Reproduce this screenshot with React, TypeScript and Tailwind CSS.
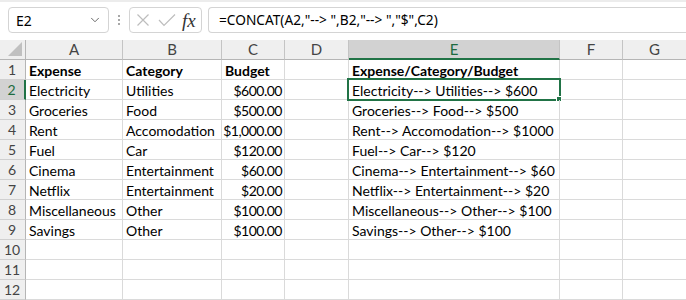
import { ChevronDown } from 'lucide-react';

type Row = { a: string; b: string; c: string; e: string };

const rows: Row[] = [
  { a: 'Electricity', b: 'Utilities', c: '$600.00', e: 'Electricity--> Utilities--> $600' },
  { a: 'Groceries', b: 'Food', c: '$500.00', e: 'Groceries--> Food--> $500' },
  { a: 'Rent', b: 'Accomodation', c: '$1,000.00', e: 'Rent--> Accomodation--> $1000' },
  { a: 'Fuel', b: 'Car', c: '$120.00', e: 'Fuel--> Car--> $120' },
  { a: 'Cinema', b: 'Entertainment', c: '$60.00', e: 'Cinema--> Entertainment--> $60' },
  { a: 'Netflix', b: 'Entertainment', c: '$20.00', e: 'Netflix--> Entertainment--> $20' },
  { a: 'Miscellaneous', b: 'Other', c: '$100.00', e: 'Miscellaneous--> Other--> $100' },
  { a: 'Savings', b: 'Other', c: '$100.00', e: 'Savings--> Other--> $100' },
];

const cell = 'h-[20px] shrink-0 border-r border-b border-[#dadada] px-[3px] pt-[1px] leading-[20px] whitespace-nowrap overflow-visible';

function ColHeader({ label, w, active }: { label: string; w: string; active?: boolean }) {
  return (
    <div
      className={`${w} flex h-full shrink-0 items-center justify-center border-r border-[#c4c4c4] ${
        active ? 'border-b-2 border-b-[#217346] bg-[#d2d2d2] text-[#1e6b40]' : 'border-b border-b-[#b5b5b5] text-[#444]'
      }`}
    >
      {label}
    </div>
  );
}

function RowHeader({ n, active }: { n: number; active?: boolean }) {
  return (
    <div
      className={`flex h-[20px] w-[26px] shrink-0 items-center justify-center border-b border-[#d0d0d0] pr-[1px] ${
        active ? 'border-r-2 border-r-[#217346] bg-[#d2d2d2] text-[#1e6b40]' : 'border-r border-r-[#b5b5b5] bg-[#efefef] text-[#444]'
      }`}
    >
      {n}
    </div>
  );
}

export default function App() {
  return (
    <div className="h-[300px] w-[686px] overflow-hidden bg-white font-['Lato',sans-serif] text-[14px] text-black">
      {/* Formula bar */}
      <div className="h-[2px] bg-[#ececec]" />
      <div className="flex h-[38px] items-start pt-[5px] font-['Noto_Sans',sans-serif]">
        <div className="ml-[8px] flex h-[26px] w-[101px] items-center justify-between rounded-[4px] border border-[#d4d4d4] pl-[7px] pr-[6px] text-[14px] text-black">
          <span>E2</span>
          <ChevronDown size={14} strokeWidth={1.5} className="text-[#555]" />
        </div>
        <div className="ml-[9px] mt-[8px] flex flex-col gap-[2px]">
          <span className="h-[2px] w-[2px] bg-[#a8a8a8]" />
          <span className="h-[2px] w-[2px] bg-[#a8a8a8]" />
          <span className="h-[2px] w-[2px] bg-[#a8a8a8]" />
        </div>
        <div className="ml-[9px] flex h-[26px] w-[73px] items-center rounded-[4px] border border-[#d4d4d4] pl-[5px]">
          <svg width="14" height="14" viewBox="0 0 14 14" className="ml-[1px]">
            <path d="M1.5 1.5 L12.5 12.5 M12.5 1.5 L1.5 12.5" stroke="#bdbdbd" strokeWidth="1.2" fill="none" />
          </svg>
          <svg width="18" height="14" viewBox="0 0 18 14" className="ml-[8px]">
            <path d="M1 7 L6 12.5 L17 1.5" stroke="#bdbdbd" strokeWidth="1.2" fill="none" />
          </svg>
          <span className="ml-[6px] font-['Liberation_Serif',serif] text-[19px] italic leading-none text-[#333]">fx</span>
        </div>
        <div className="ml-[6px] flex h-[26px] flex-1 items-center rounded-l-[4px] border border-r-0 border-[#d4d4d4] pl-[10px] text-[13.7px] text-black">
          =CONCAT(A2,"--&gt; ",B2,"--&gt; ","$",C2)
        </div>
      </div>

      {/* Column headers */}
      <div className="flex h-[20px] bg-[#efefef] text-[15px]">
        <div className="relative h-full w-[26px] shrink-0 border-r border-b border-[#b5b5b5]">
          <svg width="14" height="14" viewBox="0 0 14 14" className="absolute bottom-[3px] right-[3px]">
            <path d="M14 0 L14 14 L0 14 Z" fill="#c0c0c0" />
          </svg>
        </div>
        <ColHeader label="A" w="w-[97px]" />
        <ColHeader label="B" w="w-[99px]" />
        <ColHeader label="C" w="w-[63px]" />
        <ColHeader label="D" w="w-[64px]" />
        <ColHeader label="E" w="w-[211px]" active />
        <ColHeader label="F" w="w-[63px]" />
        <ColHeader label="G" w="w-[64px]" />
      </div>

      {/* Row 1: headings */}
      <div className="flex">
        <RowHeader n={1} />
        <div className={`${cell} w-[97px] font-bold`}>Expense</div>
        <div className={`${cell} w-[99px] font-bold`}>Category</div>
        <div className={`${cell} w-[63px] font-bold`}>Budget</div>
        <div className={`${cell} w-[64px]`} />
        <div className={`${cell} w-[211px] font-bold`}>Expense/Category/Budget</div>
        <div className={`${cell} w-[63px]`} />
        <div className={`${cell} w-[64px]`} />
      </div>

      {rows.map((r, i) => (
        <div key={r.a} className="flex">
          <RowHeader n={i + 2} active={i === 0} />
          <div className={`${cell} w-[97px]`}>{r.a}</div>
          <div className={`${cell} w-[99px]`}>{r.b}</div>
          <div className={`${cell} flex w-[63px] justify-end pl-0 pr-[2px] tracking-[-0.5px]`}>{r.c}</div>
          <div className={`${cell} w-[64px]`} />
          <div className={`${cell} relative w-[211px]`}>
            {r.e}
            {i === 0 && (
              <>
                <div className="pointer-events-none absolute -top-[2px] -left-[2px] h-[23px] w-[214px] border-2 border-[#217346]" />
                <div className="absolute -bottom-[3px] -right-[3px] h-[6px] w-[6px] border border-white bg-[#217346]" />
              </>
            )}
          </div>
          <div className={`${cell} w-[63px]`} />
          <div className={`${cell} w-[64px]`} />
        </div>
      ))}

      {[10, 11, 12].map((n) => (
        <div key={n} className="flex">
          <RowHeader n={n} />
          <div className={`${cell} w-[97px]`} />
          <div className={`${cell} w-[99px]`} />
          <div className={`${cell} w-[63px]`} />
          <div className={`${cell} w-[64px]`} />
          <div className={`${cell} w-[211px]`} />
          <div className={`${cell} w-[63px]`} />
          <div className={`${cell} w-[64px]`} />
        </div>
      ))}
    </div>
  );
}
